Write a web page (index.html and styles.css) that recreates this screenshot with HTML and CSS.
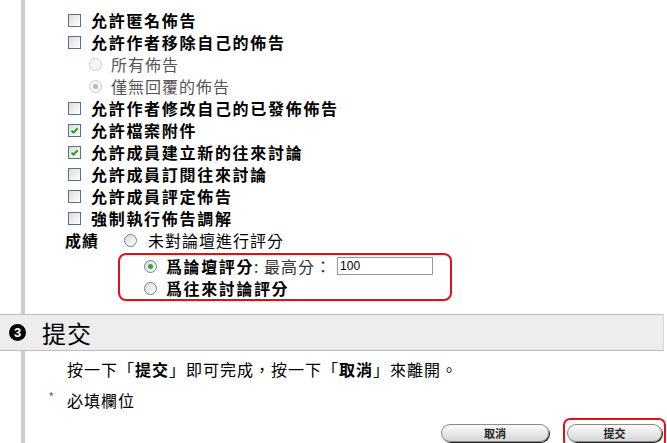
FILE: index.html
```html
<!DOCTYPE html>
<html>
  <head>
    <title>論壇設定</title>
    <link rel="stylesheet" href="styles.css">
  </head>
  <body>
    <div class="options">
      <ul class="opts">
        <li><span class="box"></span><b>允許匿名佈告</b></li>
        <li><span class="box"></span><b>允許作者移除自己的佈告</b></li>
        <li class="sub"><span class="radio off"></span>所有佈告</li>
        <li class="sub"><span class="radio off on"></span>僅無回覆的佈告</li>
        <li><span class="box"></span><b>允許作者修改自己的已發佈佈告</b></li>
        <li><span class="box checked"><svg viewBox="0 0 8 8"><path d="M1.3 4.2 L3.2 6 L6.8 2" /></svg></span><b>允許檔案附件</b></li>
        <li><span class="box checked"><svg viewBox="0 0 8 8"><path d="M1.3 4.2 L3.2 6 L6.8 2" /></svg></span><b>允許成員建立新的往來討論</b></li>
        <li><span class="box"></span><b>允許成員訂閱往來討論</b></li>
        <li><span class="box"></span><b>允許成員評定佈告</b></li>
        <li><span class="box"></span><b>強制執行佈告調解</b></li>
      </ul>
      <div class="grade">
        <b class="grade-label">成績</b>
        <div class="grade-choices">
          <div class="choice"><span class="radio"></span>未對論壇進行評分</div>
          <div class="hl">
            <div class="choice"><span class="radio on"></span><b>爲論壇評分</b><span class="maxlbl">: 最高分：</span><input class="points" type="text" value="100"></div>
            <div class="choice"><span class="radio"></span><b>爲往來討論評分</b></div>
          </div>
        </div>
      </div>
    </div>

    <h2 class="step"><span class="num">3</span>提交</h2>

    <div class="submit-body">
      <p class="hint">按一下「<b>提交</b>」即可完成，按一下「<b>取消</b>」來離開。</p>
      <p class="req"><span class="star">*</span>必填欄位</p>
      <div class="buttons">
        <button class="btn">取消</button>
        <span class="hl-btn"><button class="btn">提交</button></span>
      </div>
    </div>
  </body>
</html>
```

FILE: styles.css
```css
body {
  margin: 0;
  font-family: "Noto Sans CJK TC", "Noto Sans", sans-serif;
  font-size: 16px;
  color: #000;
  background: #fff;
  overflow: hidden;
}
b {
  font-weight: bold;
}
.options {
  margin-left: 21px;
  border-left: 4px solid #cccccc;
  padding: 9px 0 13px 43px;
}
.opts {
  list-style: none;
  margin: 0;
  padding: 0;
}
.opts li {
  display: flex;
  align-items: center;
  height: 22px;
  letter-spacing: 1.7px;
}
.opts li.sub {
  padding-left: 21px;
  color: #555;
  letter-spacing: 1px;
}
.box {
  width: 11px;
  height: 11px;
  border: 1px solid #56708a;
  background: linear-gradient(135deg, #dcdcd6, #ffffff);
  margin-right: 10px;
  flex: none;
  display: flex;
  align-items: center;
  justify-content: center;
}
.box svg {
  width: 9px;
  height: 9px;
}
.box svg path {
  stroke: #21a121;
  stroke-width: 1.7;
  fill: none;
}
.radio {
  width: 11px;
  height: 11px;
  border: 1px solid #6d8196;
  border-radius: 50%;
  background: linear-gradient(135deg, #dcdcd6, #ffffff);
  margin-right: 9px;
  flex: none;
  position: relative;
}
.radio.on::after {
  content: "";
  position: absolute;
  left: 3px;
  top: 3px;
  width: 5px;
  height: 5px;
  border-radius: 50%;
  background: #3aa03a;
}
.radio.off {
  border-color: #c8ccd0;
  background: #f6f6f6;
}
.radio.off.on::after {
  background: #b8b8b8;
}
.grade {
  display: flex;
  margin-left: -3px;
}
.grade-label {
  width: 59px;
  height: 22px;
  line-height: 22px;
  letter-spacing: 1px;
}
.choice {
  display: flex;
  align-items: center;
  height: 22px;
  letter-spacing: 1px;
}
.grade-choices > .choice .radio {
  margin-right: 11px;
}
.choice b {
  letter-spacing: 1.6px;
}
.hl {
  margin: 2px 0 0 -6px;
  width: 306px;
  padding-left: 24px;
  border: 2px solid #e0101a;
  border-radius: 8px;
}
.hl .radio {
  margin-right: 9px;
}
.maxlbl {
  color: #333;
  letter-spacing: 1px;
}
.points {
  margin-left: 5px;
  width: 90px;
  height: 16px;
  padding: 0 2px;
  border: 1px solid #9a9a9a;
  font-family: "Liberation Sans", sans-serif;
  font-size: 12px;
}
.step {
  margin: 0;
  width: 663px;
  height: 35px;
  background: #ededed;
  border-top: 1px solid #bdbdbd;
  border-bottom: 1px solid #bdbdbd;
  border-right: 1px solid #d8d8d8;
  display: flex;
  align-items: center;
  font-size: 24px;
  font-weight: normal;
  letter-spacing: 1px;
}
.num {
  width: 17px;
  height: 17px;
  border-radius: 50%;
  background: #000;
  color: #fff;
  font-family: "Liberation Sans", sans-serif;
  font-size: 13px;
  font-weight: bold;
  display: flex;
  align-items: center;
  justify-content: center;
  margin: 0 16px 0 9px;
  letter-spacing: 0;
}
.submit-body {
  margin-left: 21px;
  border-left: 4px solid #cccccc;
  padding: 7px 0 10px 0;
}
.hint {
  margin: 0 0 9px 42px;
  line-height: 22px;
  letter-spacing: 1px;
}
.req {
  margin: 0;
  display: flex;
  line-height: 22px;
  letter-spacing: 1px;
}
.star {
  width: 42px;
  box-sizing: border-box;
  padding-right: 12px;
  text-align: right;
  color: #d04040;
  font-size: 12px;
  line-height: 16px;
}
.buttons {
  display: flex;
  justify-content: flex-end;
  align-items: center;
  gap: 14px;
  margin-top: 7px;
  width: 641px;
}
.btn {
  width: 108px;
  height: 18px;
  padding: 0;
  border: 1px solid #8a8a8a;
  border-radius: 9px;
  background: linear-gradient(#fbfbfb, #d6d6d6);
  box-shadow: 1px 1px 0 #222;
  font-family: "Noto Sans CJK TC", sans-serif;
  font-size: 11px;
  font-weight: bold;
  color: #222;
}
.hl-btn {
  display: flex;
  border: 2px solid #e0101a;
  border-radius: 7px;
  padding: 4px 2px;
}
.hl-btn .btn {
  width: 95px;
}
```
